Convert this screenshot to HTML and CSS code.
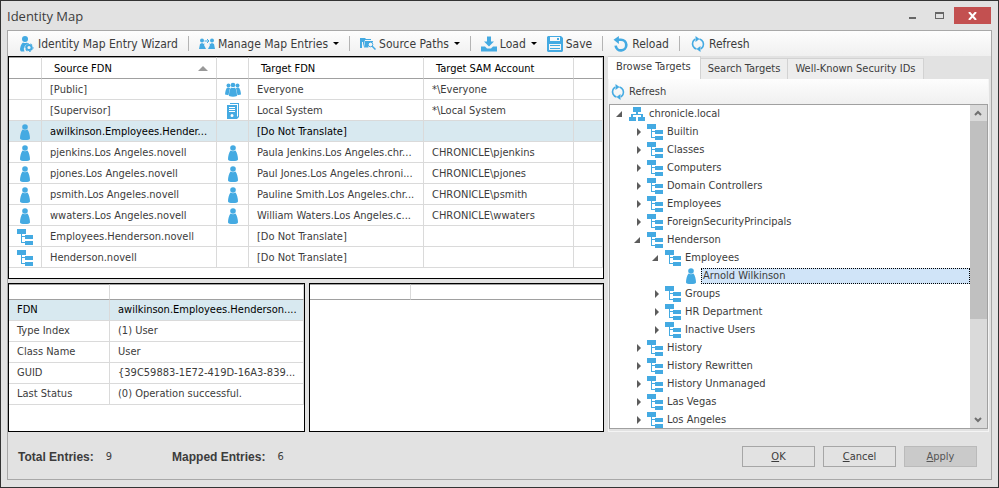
FILE: index.html
```html
<!DOCTYPE html>
<html lang="en">
<head>
    <meta charset="UTF-8">
    <meta name="viewport" content="width=device-width, initial-scale=1.0">
    <title>Identity Map</title>
    <link rel="stylesheet" href="styles.css">
</head>
<body>
    <!-- Icon set -->
    <svg class="sprite" aria-hidden="true">
        <symbol id="i-user" viewBox="0 0 16 16">
            <circle cx="8" cy="3" r="2.800"/>
            <path d="M5.500 5.500Q8 7 10.500 5.500C12 7.500 13 11 13 14.500Q12.500 16 8 16T3 14.500C3 11 4 7.500 5.500 5.500z"/>
        </symbol>
        <symbol id="i-ou" viewBox="0 0 16 16">
            <path d="M0 0h9v5H5v2h3V6h8v4H8V8H5v5h3v-1h8v4H8v-2H4V5H0z"/>
        </symbol>
        <symbol id="i-domain" viewBox="0 0 16 14">
            <path d="M4 0h8v5H9v2h5v3h2v4H9v-4h3V8H4v2h3v4H0v-4h2V7h5V5H4z"/>
        </symbol>
        <symbol id="i-group" viewBox="0 0 16 16">
            <circle cx="8" cy="3" r="2.300"/><circle cx="3.500" cy="3.500" r="2"/><circle cx="12.500" cy="3.500" r="2"/>
            <path d="M2.500 5.500C1 6.500.300 9 0 12.500l3.500.800L5 6z"/>
            <path d="M13.500 5.500c1.500 1 2.200 3.500 2.500 7l-3.500.800L11 6z"/>
            <path d="M6 5.500Q8 6.500 10 5.500C11.500 7.500 12 11 12 14q-4 1.500-8 0C4 11 4.500 7.500 6 5.500z"/>
        </symbol>
        <symbol id="i-server" viewBox="0 0 12 16">
            <path fill-rule="evenodd" d="M3 0h9v14l-2 2H0V2h10v12l1-1V1H3zM2 4v1h6V4zm0 2v1h6V6zm0 2v1h6V8zm3 3a1.500 1.500 0 1 0 0 3 1.500 1.500 0 0 0 0-3z"/>
        </symbol>
        <symbol id="i-wizard" viewBox="0 0 14 16">
            <circle cx="5" cy="3" r="3"/>
            <path d="M3 6.500q2 1 4 0l1 1.500a5 5 0 0 0-3.500 7.500H1q-1-1-1-2.500C.500 10 1.500 7.500 3 6.500z"/>
            <circle cx="9" cy="11.500" r="2.600" fill="none" stroke="currentColor" stroke-width="2"/>
            <circle cx="9" cy="11.500" r="4" fill="none" stroke="currentColor" stroke-dasharray="2 2"/>
        </symbol>
        <symbol id="i-manage" viewBox="0 0 16 12">
            <circle cx="3" cy="2.500" r="2"/><circle cx="13" cy="2.500" r="2"/>
            <path d="M0 11l1-5 2-1 2 1 1-1-1 2 2 4zM16 11l-1-5-2-1-2 1-1-1 1 2-2 4z"/>
            <path d="M5.500 3h4M8 1l2 2-2 2" fill="none" stroke="currentColor"/>
        </symbol>
        <symbol id="i-folder" viewBox="0 0 16 12">
            <path d="M0 0h5l1 1h5v1H5L3 9V4H2v6H0z"/>
            <path d="M5 3h8v1.500a3.500 3.500 0 0 0-4.500 5H4z"/>
            <circle cx="10.500" cy="6.500" r="2.300" fill="none" stroke="currentColor"/>
            <path d="M12 8l3.500 3.500" fill="none" stroke="currentColor" stroke-width="1.500"/>
        </symbol>
        <symbol id="i-load" viewBox="0 0 16 15">
            <path d="M6 0h4v5h3L8 10 3 5h3zM0 10h4l2 2h4l2-2h4v5H0z"/>
        </symbol>
        <symbol id="i-save" viewBox="0 0 16 16">
            <path fill-rule="evenodd" d="M1 0h13l2 2v13l-1 1H1l-1-1V1zM3 1v4h10V1zM2 8v6h12V8z"/>
            <path d="M10 2h2v2h-2zM3 9h10v1H3zM3 12h10v1H3z"/>
        </symbol>
        <symbol id="i-reload" viewBox="0 0 14 15">
            <path d="M4 3.500h3a5 5 0 1 1-5 5.500" fill="none" stroke="currentColor" stroke-width="2.500"/>
            <path d="M0 3.500L5 0v7.500z"/>
        </symbol>
        <symbol id="i-refresh" viewBox="0 0 14 16">
            <path d="M5.500 13A5.500 5.500 0 0 1 2 5.500L4 3M8.500 3A5.500 5.500 0 0 1 12 10.500L10 13" fill="none" stroke="currentColor" stroke-width="1.600"/>
            <path d="M4.500 0l4 3-4 3zM9.500 10l-4 3 4 3z"/>
        </symbol>
    </svg>

    <div class="window">
        <header class="titlebar">
            <h1>Identity Map</h1>
            <div class="window-buttons">
                <button type="button" aria-label="Minimize"><span class="glyph-min"></span></button>
                <button type="button" aria-label="Maximize"><span class="glyph-max"></span></button>
                <button type="button" class="close" aria-label="Close">
                    <svg width="9" height="8" viewBox="0 0 9 8"><path d="M1 0l7 8M8 0L1 8" stroke="#fff" stroke-width="2"/></svg>
                </button>
            </div>
        </header>

        <main class="client">
            <div class="toolbar">
                <button type="button"><svg class="icon"><use href="#i-wizard"/></svg>Identity Map Entry Wizard</button>
                <span class="sep"></span>
                <button type="button"><svg class="icon"><use href="#i-manage"/></svg>Manage Map Entries<span class="caret"></span></button>
                <span class="sep"></span>
                <button type="button"><svg class="icon"><use href="#i-folder"/></svg>Source Paths<span class="caret"></span></button>
                <span class="sep"></span>
                <button type="button"><svg class="icon"><use href="#i-load"/></svg>Load<span class="caret"></span></button>
                <button type="button"><svg class="icon"><use href="#i-save"/></svg>Save</button>
                <span class="sep"></span>
                <button type="button"><svg class="icon"><use href="#i-reload"/></svg>Reload</button>
                <span class="sep"></span>
                <button type="button"><svg class="icon"><use href="#i-refresh"/></svg>Refresh</button>
            </div>

            <div class="panes">
                <div class="left">
                    <section class="panel entries">
                        <table>
                            <colgroup>
                                <col class="col-type"><col><col class="col-icon"><col><col class="col-sam"><col class="col-end">
                            </colgroup>
                            <thead>
                                <tr>
                                    <th></th>
                                    <th><div class="sorted">Source FDN<span class="sort-arrow"></span></div></th>
                                    <th></th>
                                    <th>Target FDN</th>
                                    <th>Target SAM Account</th>
                                    <th></th>
                                </tr>
                            </thead>
                            <tbody>
                                <tr><td></td><td>[Public]</td><td><svg class="icon"><use href="#i-group"/></svg></td><td>Everyone</td><td>*\Everyone</td><td></td></tr>
                                <tr><td></td><td>[Supervisor]</td><td><svg class="icon"><use href="#i-server"/></svg></td><td>Local System</td><td>*\Local System</td><td></td></tr>
                                <tr class="selected"><td><svg class="icon"><use href="#i-user"/></svg></td><td>awilkinson.Employees.Hender...</td><td></td><td>[Do Not Translate]</td><td></td><td></td></tr>
                                <tr><td><svg class="icon"><use href="#i-user"/></svg></td><td>pjenkins.Los Angeles.novell</td><td><svg class="icon"><use href="#i-user"/></svg></td><td>Paula Jenkins.Los Angeles.chr...</td><td>CHRONICLE\pjenkins</td><td></td></tr>
                                <tr><td><svg class="icon"><use href="#i-user"/></svg></td><td>pjones.Los Angeles.novell</td><td><svg class="icon"><use href="#i-user"/></svg></td><td>Paul Jones.Los Angeles.chroni...</td><td>CHRONICLE\pjones</td><td></td></tr>
                                <tr><td><svg class="icon"><use href="#i-user"/></svg></td><td>psmith.Los Angeles.novell</td><td><svg class="icon"><use href="#i-user"/></svg></td><td>Pauline Smith.Los Angeles.chr...</td><td>CHRONICLE\psmith</td><td></td></tr>
                                <tr><td><svg class="icon"><use href="#i-user"/></svg></td><td>wwaters.Los Angeles.novell</td><td><svg class="icon"><use href="#i-user"/></svg></td><td>William Waters.Los Angeles.c...</td><td>CHRONICLE\wwaters</td><td></td></tr>
                                <tr><td><svg class="icon"><use href="#i-ou"/></svg></td><td>Employees.Henderson.novell</td><td></td><td>[Do Not Translate]</td><td></td><td></td></tr>
                                <tr><td><svg class="icon"><use href="#i-ou"/></svg></td><td>Henderson.novell</td><td></td><td>[Do Not Translate]</td><td></td><td></td></tr>
                            </tbody>
                        </table>
                    </section>

                    <div class="details">
                        <section class="panel">
                            <table>
                                <colgroup><col class="col-name"><col></colgroup>
                                <thead class="blank"><tr><th></th><th></th></tr></thead>
                                <tbody>
                                    <tr class="selected"><td>FDN</td><td>awilkinson.Employees.Henderson....</td></tr>
                                    <tr><td>Type Index</td><td>(1) User</td></tr>
                                    <tr><td>Class Name</td><td>User</td></tr>
                                    <tr><td>GUID</td><td>{39C59883-1E72-419D-16A3-839...</td></tr>
                                    <tr><td>Last Status</td><td>(0) Operation successful.</td></tr>
                                </tbody>
                            </table>
                        </section>
                        <section class="panel">
                            <table>
                                <colgroup><col class="col-name"><col></colgroup>
                                <thead class="blank"><tr><th></th><th></th></tr></thead>
                            </table>
                        </section>
                    </div>
                </div>

                <section class="right">
                    <div class="tabs" role="tablist">
                        <button type="button" role="tab" class="active" aria-selected="true">Browse Targets</button>
                        <button type="button" role="tab">Search Targets</button>
                        <button type="button" role="tab">Well-Known Security IDs</button>
                    </div>
                    <div class="tab-page">
                        <div class="toolbar small">
                            <button type="button"><svg class="icon"><use href="#i-refresh"/></svg>Refresh</button>
                        </div>
                        <div class="tree-box">
                            <ul class="tree">
                                <li>
                                    <div class="node"><span class="toggle open"></span><svg class="icon"><use href="#i-domain"/></svg><span>chronicle.local</span></div>
                                    <ul>
                                        <li><div class="node"><span class="toggle"></span><svg class="icon"><use href="#i-ou"/></svg><span>Builtin</span></div></li>
                                        <li><div class="node"><span class="toggle"></span><svg class="icon"><use href="#i-ou"/></svg><span>Classes</span></div></li>
                                        <li><div class="node"><span class="toggle"></span><svg class="icon"><use href="#i-ou"/></svg><span>Computers</span></div></li>
                                        <li><div class="node"><span class="toggle"></span><svg class="icon"><use href="#i-ou"/></svg><span>Domain Controllers</span></div></li>
                                        <li><div class="node"><span class="toggle"></span><svg class="icon"><use href="#i-ou"/></svg><span>Employees</span></div></li>
                                        <li><div class="node"><span class="toggle"></span><svg class="icon"><use href="#i-ou"/></svg><span>ForeignSecurityPrincipals</span></div></li>
                                        <li>
                                            <div class="node"><span class="toggle open"></span><svg class="icon"><use href="#i-ou"/></svg><span>Henderson</span></div>
                                            <ul>
                                                <li>
                                                    <div class="node"><span class="toggle open"></span><svg class="icon"><use href="#i-ou"/></svg><span>Employees</span></div>
                                                    <ul>
                                                        <li><div class="node current"><span class="toggle none"></span><svg class="icon"><use href="#i-user"/></svg><span>Arnold Wilkinson</span></div></li>
                                                    </ul>
                                                </li>
                                                <li><div class="node"><span class="toggle"></span><svg class="icon"><use href="#i-ou"/></svg><span>Groups</span></div></li>
                                                <li><div class="node"><span class="toggle"></span><svg class="icon"><use href="#i-ou"/></svg><span>HR Department</span></div></li>
                                                <li><div class="node"><span class="toggle"></span><svg class="icon"><use href="#i-ou"/></svg><span>Inactive Users</span></div></li>
                                            </ul>
                                        </li>
                                        <li><div class="node"><span class="toggle"></span><svg class="icon"><use href="#i-ou"/></svg><span>History</span></div></li>
                                        <li><div class="node"><span class="toggle"></span><svg class="icon"><use href="#i-ou"/></svg><span>History Rewritten</span></div></li>
                                        <li><div class="node"><span class="toggle"></span><svg class="icon"><use href="#i-ou"/></svg><span>History Unmanaged</span></div></li>
                                        <li><div class="node"><span class="toggle"></span><svg class="icon"><use href="#i-ou"/></svg><span>Las Vegas</span></div></li>
                                        <li><div class="node"><span class="toggle"></span><svg class="icon"><use href="#i-ou"/></svg><span>Los Angeles</span></div></li>
                                    </ul>
                                </li>
                            </ul>
                            <div class="scrollbar">
                                <svg width="16" height="16"><path d="M5 10l3-3 3 3"/></svg>
                                <div class="track"><div class="thumb"></div></div>
                                <svg width="16" height="16"><path d="M5 6l3 3 3-3"/></svg>
                            </div>
                        </div>
                    </div>
                </section>
            </div>

            <footer class="footer">
                <div class="total"><b>Total Entries:</b><span>9</span></div>
                <div class="total"><b>Mapped Entries:</b><span>6</span></div>
                <div class="actions">
                    <button type="button"><u>O</u>K</button>
                    <button type="button"><u>C</u>ancel</button>
                    <button type="button" disabled><u>A</u>pply</button>
                </div>
            </footer>
        </main>
    </div>
</body>
</html>
```

FILE: styles.css
```css
* {
    box-sizing: border-box;
}

body {
    margin: 0;
    font-family: "DejaVu Sans Condensed", "DejaVu Sans", sans-serif;
    font-size: 11px;
    line-height: 14px;
    color: #3c3c3c;
}

button {
    font: inherit;
    color: inherit;
    background: none;
    border: none;
    padding: 0;
    white-space: nowrap;
}

ul {
    list-style: none;
    margin: 0;
    padding: 0;
}

.sprite {
    display: none;
}

.icon {
    width: 16px;
    height: 16px;
    flex: none;
    color: #44aae2;
    fill: currentColor;
}

.window {
    min-height: 100vh;
    display: flex;
    flex-direction: column;
    padding: 0 6px 7px;
    background: #e2e2e2;
    border: 1px solid #333;
}

/* Title bar */
.titlebar {
    height: 29px;
    display: flex;
    justify-content: space-between;
}

.titlebar h1 {
    margin: 0;
    font-family: "Open Sans", sans-serif;
    font-size: 13px;
    font-weight: 400;
    line-height: 30px;
}

.window-buttons {
    display: flex;
    height: 23px;
    padding: 6px 1px 0 0;
}

.window-buttons button {
    width: 27px;
    height: 17px;
    display: flex;
    align-items: center;
    justify-content: center;
}

.window-buttons .close {
    width: 37px;
    margin-left: 1px;
    background: #c35050;
}

.glyph-min {
    width: 7px;
    height: 2px;
    margin-top: 4px;
    background: #666;
}

.glyph-max {
    width: 9px;
    height: 7px;
    border: 1px solid #666;
    border-top-width: 2px;
}

/* Client area */
.client {
    flex: 1;
    display: flex;
    flex-direction: column;
    border: 1px solid #a8a8a8;
}

.toolbar {
    height: 25px;
    display: flex;
    align-items: center;
    gap: 10px;
    padding-left: 11px;
    background: linear-gradient(#fdfdfd, #f0f0f0);
}

.toolbar button {
    height: 20px;
    display: flex;
    align-items: center;
    gap: 3px;
    font-size: 12px;
}

.sep {
    width: 1px;
    height: 15px;
    background: #b4b4b4;
}

.caret {
    margin-left: 2px;
    border: 3px solid transparent;
    border-top-color: #000;
    border-bottom: 0;
}

.panes {
    flex: 1;
    display: grid;
    grid-template-columns: minmax(0, 596fr) minmax(0, 381fr);
    gap: 4px;
    padding-right: 2px;
}

.left {
    display: flex;
    flex-direction: column;
    gap: 4px;
}

.panel {
    background: #fff;
    border: 1px solid #000;
    overflow: hidden;
}

.entries {
    flex: 222;
}

.details {
    flex: 150;
    display: grid;
    grid-template-columns: minmax(0, 297fr) minmax(0, 295fr);
    gap: 4px;
}

/* Grids */
table {
    width: 100%;
    table-layout: fixed;
    border-collapse: separate;
    border-spacing: 0;
}

.col-type {
    width: 33px;
}

.col-icon {
    width: 32px;
}

.col-sam {
    width: 150px;
}

.col-end {
    width: 29px;
}

.col-name {
    width: 101px;
}

th,
td {
    height: 21px;
    padding: 1px 0 0 8px;
    text-align: left;
    white-space: nowrap;
    border-right: 1px solid #dadada;
    border-bottom: 1px solid #dadada;
}

th {
    height: 22px;
    padding-left: 12px;
    font-weight: 400;
    color: #000;
    border-top: 1px solid #a0a0a0;
    border-bottom-color: #a0a0a0;
}

.blank th {
    height: 16px;
}

td .icon {
    display: block;
}

.sorted {
    display: flex;
    align-items: center;
    justify-content: space-between;
    padding-right: 8px;
}

.sort-arrow {
    border: 5px solid transparent;
    border-top: 0;
    border-bottom-color: #999;
}

.selected td {
    background: #d8e9f0;
    color: #000;
}

/* Browse targets */
.right {
    display: flex;
    flex-direction: column;
}

.tabs {
    display: flex;
    align-items: flex-end;
    height: 23px;
}

.tabs button {
    height: 21px;
    padding: 0 7px;
    background: #ededed;
    border: 1px solid #d2d2d2;
    border-left: 0;
    border-bottom: 0;
}

.tabs .active {
    height: 23px;
    padding: 0 9px 3px 8px;
    background: #fff;
}

.tab-page {
    flex: 1;
    display: flex;
    flex-direction: column;
    padding-bottom: 2px;
    border: 1px solid #f4f4f4;
    border-top: 0;
}

.small {
    padding-left: 1px;
}

.small button {
    font-size: 11px;
}

.tree-box {
    flex: 1;
    display: flex;
    background: #fff;
    border: 1px solid #a0a0a0;
    overflow: hidden;
}

.tree {
    flex: 1;
    margin-bottom: -4px;
    padding-left: 5px;
}

.tree ul {
    padding-left: 18px;
}

.node {
    height: 18px;
    display: flex;
    align-items: center;
    gap: 2px;
}

.node > span:last-child {
    padding: 1px 2px;
}

.node.current > span:last-child {
    flex: 1;
    background: #d0e4f8;
    outline: 1px dotted #000;
    outline-offset: -1px;
}

.toggle {
    width: 12px;
    height: 8px;
    flex: none;
    background: #5c5c5c;
    clip-path: polygon(4px 0, 8px 4px, 4px 8px);
}

.toggle.open {
    clip-path: polygon(7px 1px, 7px 7px, 1px 7px);
}

.toggle.none {
    background: none;
}

.scrollbar {
    width: 17px;
    display: flex;
    flex-direction: column;
    background: #dadada;
}

.scrollbar path {
    fill: none;
    stroke: #707070;
    stroke-width: 2;
}

.track {
    flex: 1;
}

.thumb {
    height: 68%;
    background: #c0c0c0;
}

/* Footer */
.footer {
    height: 47px;
    display: flex;
    align-items: center;
    padding: 2px 14px 0 10px;
}

.total {
    display: flex;
    gap: 12px;
    margin-right: 60px;
}

.total b {
    font-family: "Liberation Sans", sans-serif;
    font-size: 12px;
}

.actions {
    display: flex;
    gap: 8px;
    margin-left: auto;
}

.actions button {
    width: 73px;
    height: 21px;
    border: 1px solid #a6a6a6;
}

.actions button:disabled {
    color: #555;
    background: #cacaca;
    border-color: #bababa;
}
```
